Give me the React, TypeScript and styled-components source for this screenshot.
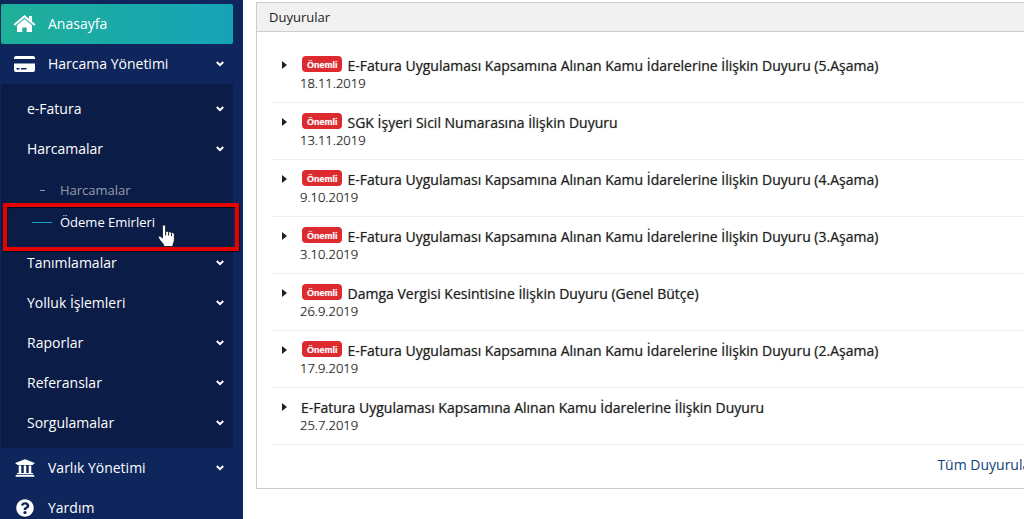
import React from "react";
import styled, { createGlobalStyle, css } from "styled-components";
import { FaQuestionCircle, FaUniversity } from "react-icons/fa";

const Global = createGlobalStyle`
  *, *::before, *::after { box-sizing: border-box; }
  body {
    margin: 0;
    background: #fff;
    color: #212121;
    font-family: "Open Sans", "Noto Sans", sans-serif;
    font-size: 14px;
    line-height: 20px;
  }
  ul { list-style: none; margin: 0; padding: 0; }
  h2 { margin: 0; font-weight: 400; font-size: inherit; }
`;

const Page = styled.div`
  display: flex;
  height: 100vh;
  overflow: hidden;
`;

const Sidebar = styled.nav`
  flex: 0 0 243px;
  padding: 4px 10px 0 1px;
  background: #0f265c;
`;

const rowStyles = css`
  display: flex;
  align-items: center;
  width: 100%;
  border: 0;
  background: none;
  color: #fff;
  font: inherit;
  text-align: left;
  text-decoration: none;
  cursor: pointer;
`;

const MenuLink = styled.a<{ $active?: boolean }>`
  ${rowStyles}
  height: 40px;
  padding: 0 9px 0 12px;
  gap: 12px;
  border-radius: 2px;
  ${(p) => p.$active && "background: linear-gradient(90deg, #1fb099, #17a2b8);"}
`;

const MenuButton = styled.button<{ $nested?: boolean }>`
  ${rowStyles}
  height: 40px;
  gap: 12px;
  padding: ${(p) => (p.$nested ? "0 9px 0 26px" : "0 9px 0 12px")};
`;

const IconSlot = styled.span`
  display: flex;
  flex: none;
  justify-content: center;
  width: 23px;
`;

const Label = styled.span`
  flex: 1;
`;

const Submenu = styled.ul`
  padding: 5px 0;
  border-radius: 2px;
  background: #0b1c47;
`;

const Leaves = styled.ul`
  padding: 5px 0;
`;

const LeafItem = styled.li`
  position: relative;
`;

const LeafLink = styled.a<{ $current?: boolean }>`
  ${rowStyles}
  height: 32px;
  font-size: 13px;
  color: ${(p) => (p.$current ? "#fff" : "#959ca8")};
`;

const Dash = styled.span<{ $current?: boolean }>`
  display: flex;
  justify-content: center;
  width: 59px;
  padding: 0 8px 0 31px;
  &::before {
    content: "";
    flex: none;
    width: ${(p) => (p.$current ? "20px" : "5px")};
    height: 1px;
    background: ${(p) => (p.$current ? "#17a2b8" : "#959ca8")};
  }
`;

const Highlight = styled.span`
  position: absolute;
  z-index: 1;
  top: -3px;
  left: 2px;
  right: -6px;
  bottom: -13px;
  border: 4px solid #e60000;
  border-radius: 1px;
  box-shadow: 1px 1px 1px rgba(0, 0, 0, 0.6), inset 1px 1px 1px rgba(0, 0, 0, 0.6);
  pointer-events: none;
`;

const Pointer = styled.svg`
  position: absolute;
  z-index: 2;
  top: 18px;
  left: 156px;
`;

const Main = styled.main`
  flex: 1;
  min-width: 0;
  padding: 2px 0 0 13px;
  overflow: hidden;
`;

const Panel = styled.section`
  margin-right: -26px;
  border: 1px solid #ccc;
`;

const PanelHeader = styled.header`
  padding: 4px 12px;
  border-bottom: 1px solid #ccc;
  background: #f1f1f1;
  font-size: 13px;
`;

const News = styled.ul`
  padding: 14px 14px 0;
`;

const NewsItem = styled.li`
  display: flex;
  align-items: flex-start;
  height: 57px;
  padding: 10px 0 0 11px;
  border-bottom: 1px solid #f0f0f0;
`;

const Caret = styled.span`
  flex: none;
  margin: 5px 14px 0 0;
  border: solid transparent;
  border-width: 4px 0 4px 5px;
  border-left-color: #212121;
`;

const Title = styled.a`
  display: flex;
  gap: 6px;
  height: 20px;
  color: #212121;
  text-decoration: none;
  text-shadow: 0 0 1px rgba(33, 33, 33, 0.5);
`;

const Badge = styled.span`
  height: 16px;
  margin-left: 1px;
  padding: 0 4px 0 5px;
  border-radius: 4px;
  background: #dc2a2e;
  color: #fff;
  font: 700 9px/18px "Liberation Sans", Arial, sans-serif;
  text-shadow: 0 0 1px rgba(255, 255, 255, 0.5);
`;

const NewsDate = styled.time`
  display: block;
  margin-left: -1px;
  color: #000;
  font-size: 13px;
  font-weight: 300;
  line-height: 14px;
  text-shadow: 0 0 1px rgba(0, 0, 0, 0.5);
`;

const PanelFooter = styled.footer`
  padding: 10px 13px 13px;
  text-align: right;
`;

const AllLink = styled.a`
  color: #0f4176;
  text-decoration: none;
`;

const Chevron = () => (
  <svg width="8" height="6" viewBox="0 0 8 6" fill="none" stroke="#fff" strokeWidth="2" aria-hidden="true">
    <path d="M.8 1 4 4.2 7.2 1" />
  </svg>
);

const HomeIcon = () => (
  <svg width="23" height="20" viewBox="0 0 23 20" fill="#fff" aria-hidden="true">
    <path d="M1.2 11 11.5 2.4 21.8 11" fill="none" stroke="#fff" strokeWidth="2" />
    <path d="M16 2h3v6l-3-2.600z" />
    <path d="M4 11.200 11.500 5l7.500 6.200V18h-5.300v-4.600H9.300V18H4z" />
  </svg>
);

const CardIcon = () => (
  <svg width="23" height="20" viewBox="0 0 23 20" fill="#fff" aria-hidden="true">
    <path d="M3 2h17a2 2 0 0 1 2 2v1H1V4a2 2 0 0 1 2-2z" />
    <path d="M1 9.500h21V16a2 2 0 0 1-2 2H3a2 2 0 0 1-2-2zM3.500 14v1.500h3V14zm4.500 0v1.500h5.500V14z" fillRule="evenodd" />
  </svg>
);

const HandPointer = () => (
  <Pointer width="20" height="24" viewBox="0 0 20 24" aria-hidden="true">
    <path
      d="M5.500 2.500c0-2 3-2 3 0v5.300c.5-1 2.800-.9 3 .5.600-.9 2.800-.6 2.900.7.800-.8 2.900-.2 2.900 1.100V16c0 2-1.500 3.500-1.500 6.500H7.200C6.800 19.500 3 17 1.500 14c-.6-1.800 1.400-2.600 2.600-1.200L5.500 14z"
      fill="#fff"
      stroke="#0b1020"
      strokeWidth=".8"
    />
    <path d="M8.700 7.500v4M11.600 8.500v3M14.500 9.500v2.500" stroke="#0b1020" fill="none" />
  </Pointer>
);

const announcements = [
  { title: "E-Fatura Uygulaması Kapsamına Alınan Kamu İdarelerine İlişkin Duyuru (5.Aşama)", date: "18.11.2019", important: true },
  { title: "SGK İşyeri Sicil Numarasına İlişkin Duyuru", date: "13.11.2019", important: true },
  { title: "E-Fatura Uygulaması Kapsamına Alınan Kamu İdarelerine İlişkin Duyuru (4.Aşama)", date: "9.10.2019", important: true },
  { title: "E-Fatura Uygulaması Kapsamına Alınan Kamu İdarelerine İlişkin Duyuru (3.Aşama)", date: "3.10.2019", important: true },
  { title: "Damga Vergisi Kesintisine İlişkin Duyuru (Genel Bütçe)", date: "26.9.2019", important: true },
  { title: "E-Fatura Uygulaması Kapsamına Alınan Kamu İdarelerine İlişkin Duyuru (2.Aşama)", date: "17.9.2019", important: true },
  { title: "E-Fatura Uygulaması Kapsamına Alınan Kamu İdarelerine İlişkin Duyuru", date: "25.7.2019", important: false },
];

const NestedEntry = ({ label }: { label: string }) => (
  <MenuButton $nested type="button">
    <Label>{label}</Label>
    <Chevron />
  </MenuButton>
);

export default function App() {
  return (
    <>
      <Global />
      <Page>
        <Sidebar>
          <ul>
            <li>
              <MenuLink href="#anasayfa" $active>
                <IconSlot><HomeIcon /></IconSlot>
                <Label>Anasayfa</Label>
              </MenuLink>
            </li>
            <li>
              <MenuButton type="button">
                <IconSlot><CardIcon /></IconSlot>
                <Label>Harcama Yönetimi</Label>
                <Chevron />
              </MenuButton>
              <Submenu>
                <li><NestedEntry label="e-Fatura" /></li>
                <li>
                  <NestedEntry label="Harcamalar" />
                  <Leaves>
                    <LeafItem>
                      <LeafLink href="#harcamalar">
                        <Dash />
                        Harcamalar
                      </LeafLink>
                    </LeafItem>
                    <LeafItem>
                      <LeafLink href="#odeme-emirleri" $current>
                        <Dash $current />
                        Ödeme Emirleri
                      </LeafLink>
                      <Highlight />
                      <HandPointer />
                    </LeafItem>
                  </Leaves>
                </li>
                {["Tanımlamalar", "Yolluk İşlemleri", "Raporlar", "Referanslar", "Sorgulamalar"].map((label) => (
                  <li key={label}><NestedEntry label={label} /></li>
                ))}
              </Submenu>
            </li>
            <li>
              <MenuButton type="button">
                <IconSlot><FaUniversity size={20} aria-hidden="true" /></IconSlot>
                <Label>Varlık Yönetimi</Label>
                <Chevron />
              </MenuButton>
            </li>
            <li>
              <MenuLink href="#yardim">
                <IconSlot><FaQuestionCircle size={18} aria-hidden="true" /></IconSlot>
                <Label>Yardım</Label>
              </MenuLink>
            </li>
          </ul>
        </Sidebar>
        <Main>
          <Panel>
            <PanelHeader>
              <h2>Duyurular</h2>
            </PanelHeader>
            <News>
              {announcements.map((item) => (
                <NewsItem key={item.date}>
                  <Caret />
                  <div>
                    <Title href="#duyuru">
                      {item.important && <Badge>Önemli</Badge>}
                      <span>{item.title}</span>
                    </Title>
                    <NewsDate>{item.date}</NewsDate>
                  </div>
                </NewsItem>
              ))}
            </News>
            <PanelFooter>
              <AllLink href="#tum-duyurular">Tüm Duyurular</AllLink>
            </PanelFooter>
          </Panel>
        </Main>
      </Page>
    </>
  );
}
